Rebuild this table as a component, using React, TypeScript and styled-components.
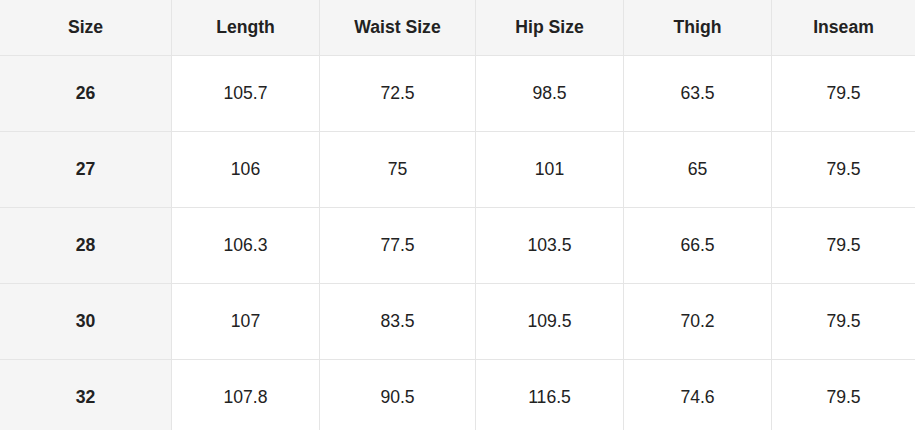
import React from 'react'
import styled, { createGlobalStyle } from 'styled-components'

const GlobalStyle = createGlobalStyle`
  html, body {
    margin: 0;
    padding: 0;
    background: #fff;
    overflow: hidden;
  }
  body {
    font-family: "Liberation Sans", Arial, sans-serif;
    color: #222;
  }
`

const headers = [`Size`, `Length`, `Waist Size`, `Hip Size`, `Thigh`, `Inseam`]

const rows = [
  [`26`, `105.7`, `72.5`, `98.5`, `63.5`, `79.5`],
  [`27`, `106`, `75`, `101`, `65`, `79.5`],
  [`28`, `106.3`, `77.5`, `103.5`, `66.5`, `79.5`],
  [`30`, `107`, `83.5`, `109.5`, `70.2`, `79.5`],
  [`32`, `107.8`, `90.5`, `116.5`, `74.6`, `79.5`],
]

const SizeTable = styled.div`
  display: grid;
  grid-template-columns: 172px 148px 156px 148px 148px 143px;
  grid-template-rows: 56px;
  grid-auto-rows: 76px;
  width: 915px;
`

const Cell = styled.div<{ $head?: boolean; $shaded?: boolean; $last?: boolean }>`
  display: flex;
  align-items: center;
  justify-content: center;
  font-size: 17.6px;
  font-weight: ${(p) => (p.$head ? 700 : 400)};
  background: ${(p) => (p.$shaded ? `#f5f5f5` : `#fff`)};
  border-bottom: 1px solid #e5e5e5;
  border-right: ${(p) => (p.$last ? `none` : `1px solid #e5e5e5`)};
`

export default function App() {
  return (
    <>
      <GlobalStyle />
      <SizeTable>
        {headers.map((h, i) => (
          <Cell key={h} $head $shaded $last={i === headers.length - 1}>
            {h}
          </Cell>
        ))}
        {rows.map((row) =>
          row.map((value, i) => (
            <Cell
              key={`${row[0]}-${i}`}
              $head={i === 0}
              $shaded={i === 0}
              $last={i === row.length - 1}
            >
              {value}
            </Cell>
          ))
        )}
      </SizeTable>
    </>
  )
}
